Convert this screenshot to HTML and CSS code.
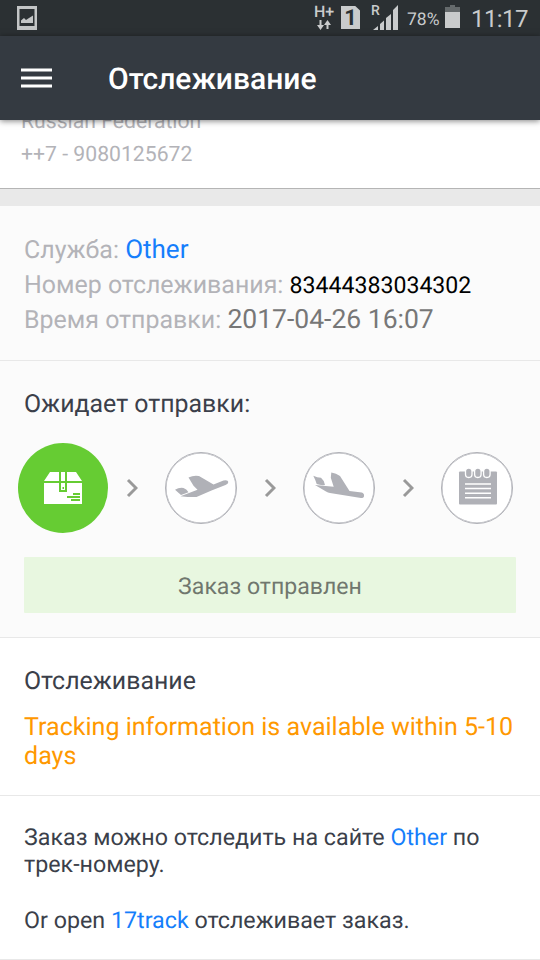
FILE: index.html
```
<!DOCTYPE html>
<html lang="ru">
<head>
<meta charset="utf-8">
<title>Отслеживание</title>
<link rel="stylesheet" href="styles.css">
</head>
<body>
<div class="status">
  <svg class="status-shot" width="20" height="24" viewBox="0 0 20 24"><path fill="#c3c5c6" fill-rule="evenodd" d="M0 0h20v24H0zM2.500 3v17h15V3z"/><path fill="#c3c5c6" d="M4 17v-2.500l3-2.500 2 2 3-2 4-2.500V17z"/></svg>
  <div class="status-net"><span>H+</span><svg width="14" height="10" viewBox="0 0 14 10"><path fill="#c9cbcc" d="M2.500 0h2v5H7L3.500 10 0 5h2.500zM9.500 9h2V5H14L10.500 0 7 5h2.500z"/></svg></div>
  <div class="status-sim">1</div>
  <div class="status-signal"><span>R</span><svg width="27" height="25" viewBox="0 0 27 25"><path fill="#c9cbcc" d="M1 25l5-4v4zM8 19l4-3.500V25H8zM14 13l5-4v16h-5zM21 5l5-5v25h-5z"/></svg></div>
  <div class="status-pct">78%</div>
  <svg class="status-batt" width="15" height="23" viewBox="0 0 15 23"><path fill="#656a6c" d="M5 0h5v2h5v6H0V2h5z"/><path fill="#c9cbcc" d="M0 7h15v16H0z"/></svg>
  <div class="status-time">11:17</div>
</div>
<header class="appbar">
  <svg width="31" height="21" viewBox="0 0 31 21"><path fill="#fff" d="M0 .5h31v3H0zM0 8.500h31v3H0zM0 16.500h31v3H0z"/></svg>
  <h1>Отслеживание</h1>
</header>
<main>
  <section class="address"><p>Russian Federation</p><p>++7 - 9080125672</p></section>
  <section class="info">
    <p>Служба: <a class="big">Other</a></p>
    <p>Номер отслеживания: <span class="number">83444383034302</span></p>
    <p>Время отправки: <span class="date">2017-04-26 16:07</span></p>
  </section>
  <section class="progress">
    <h2>Ожидает отправки:</h2>
    <div class="steps">
      <div class="step active"><svg width="90" height="90" viewBox="0 0 90 90"><path fill="#fff" d="M32 29h26l6 9H26zM26 40h38v21H26z"/><path fill="#6c3" d="M41 29h8v20h-8z"/><path fill="#fff" d="M43 29h4v9h-4zM43 40h4v7h-4z"/><path fill="#6c3" d="M44.500 44h1.500v2h-1.500zM55 50h7v2h-7zM49 53h13v2H49zM53 56h9v2h-9z"/></svg></div>
      <svg class="chev" width="12" height="20" viewBox="0 0 12 20"><path d="M2 2l8 8-8 8"/></svg>
      <div class="step"><svg width="72" height="72" viewBox="0 0 72 72"><path fill="#b0b1b7" d="M23.500 25.500q5-2.500 10.500-1.500l14.500 8.500 10-4q4.500-1 4.800 1.500 0 2-2.800 3L46.500 38.500 31.500 45h-9L15.500 44.200l17-6.500-4-4z"/><path fill="#b0b1b7" d="M10 37.800q4-2.500 8.500-1.800 3 1 5 4.200L16 43z"/></svg></div>
      <svg class="chev" width="12" height="20" viewBox="0 0 12 20"><path d="M2 2l8 8-8 8"/></svg>
      <div class="step"><svg width="72" height="72" viewBox="0 0 72 72"><path fill="#b0b1b7" d="M28.300 20.500q5 .5 8.700 3.500l9.500 15 12.200 1.500q2.800 1 2.300 3.500 0 2-3 2L27 41q-2-.5-4-1.500L12 33l18.700 1.700-2.900-9z"/><path fill="#b0b1b7" d="M10.300 23.800q4 1.800 7.700 1.900 3 2.300 4 7.300-4.500.5-8.300-1-1.200-4-3.400-8.200z"/></svg></div>
      <svg class="chev" width="12" height="20" viewBox="0 0 12 20"><path d="M2 2l8 8-8 8"/></svg>
      <div class="step"><svg width="72" height="72" viewBox="0 0 72 72"><rect x="18" y="19.500" width="38" height="33" rx="1" fill="#b0b1b7"/><g fill="#b0b1b7" stroke="#fff" stroke-width="1.300"><rect x="24.500" y="16" width="6.500" height="9.500" rx="3.200"/><rect x="33.600" y="16" width="6.500" height="9.500" rx="3.200"/><rect x="42.600" y="16" width="6.500" height="9.500" rx="3.200"/></g><path stroke="#fff" stroke-width="1.500" d="M24 32h26M24 36.600h26M24 41.200h26M24 45.800h26"/></svg></div>
    </div>
    <div class="notice">Заказ отправлен</div>
  </section>
  <section class="tracking"><h2>Отслеживание</h2><p>Tracking information is available within 5-10 days</p></section>
  <section class="links"><p>Заказ можно отследить на сайте <a>Other</a> по<br>трек-номеру.</p><p>Or open <a>17track</a> отслеживает заказ.</p></section>
</main>
</body>
</html>
```
FILE: styles.css
```
* { box-sizing: border-box; }
body { margin: 0; width: 540px; height: 960px; overflow: hidden; background: #fff; font-family: Roboto, sans-serif; color: #3b3f4a; text-rendering: geometricPrecision; }
h1, h2, p { margin: 0; font-weight: 400; }
a { color: #157efb; }
svg { display: block; flex: none; }
.status { height: 36px; background: #2b3033; color: #c9cbcc; display: flex; align-items: flex-start; padding-left: 17px; white-space: nowrap; }
.status-shot { margin-top: 6px; }
.status-net { width: 24px; margin: 4px 0 0 277px; font: 500 16px/15px Roboto, sans-serif; }
.status-net svg { margin: 1px 0 0 3px; }
.status-sim { width: 19px; height: 23px; margin: 6px 0 0 3px; background: #c9cbcc; color: #2b3033; clip-path: polygon(0 0, 75% 0, 100% 20%, 100% 100%, 0 100%); font: 700 22px/25px Roboto, sans-serif; text-align: center; }
.status-signal { width: 28px; margin: 5px 0 0 12px; display: grid; }
.status-signal span, .status-signal svg { grid-area: 1 / 1; }
.status-signal span { font: 500 14px/13px Roboto, sans-serif; margin-left: -1px; }
.status-pct { width: 34px; margin: 9px 0 0 7px; font-size: 17.5px; line-height: 22px; }
.status-batt { margin: 5px 0 0 4px; }
.status-time { margin: 5px 0 0 11px; font-size: 24px; line-height: 29px; letter-spacing: -.6px; }
.appbar { position: relative; height: 84px; background: #343a41; display: flex; align-items: center; padding-left: 21px; box-shadow: 0 1px 6px rgba(0,0,0,.5); }
.appbar h1 { margin: 3px 0 0 56px; color: #fff; font-size: 30px; line-height: 36px; font-weight: 500; }
main { background: #e9e9e9; }
.address { display: flow-root; height: 69px; padding-left: 21px; margin-bottom: 17px; background: #fff; border-bottom: 1px solid #b5b5b5; color: #b3b3b8; font-size: 21.2px; line-height: 33px; }
.address p:first-child { margin-top: -15px; }
.info { height: 155px; padding: 27px 24px; background: #fbfbfb; border-bottom: 1px solid #e8e8e8; color: #b3b3b8; font-size: 24.95px; line-height: 35px; white-space: nowrap; }
.info a, .info span { line-height: 1; }
.big { font-size: 26px; }
.number { font-size: 23.1px; color: #000; }
.date { font-size: 26.5px; color: #777; }
.progress { height: 277px; padding: 26px 24px 0; background: #fbfbfb; border-bottom: 1px solid #e8e8e8; }
h2 { font-size: 24.9px; line-height: 36px; }
.steps { display: flex; align-items: center; gap: 27px; margin: 20px -6px 24px; }
.step { width: 72px; height: 72px; flex: none; border-radius: 50%; border: 1px solid #b0b1b7; background: #fff; display: flex; align-items: center; justify-content: center; box-shadow: inset 0 0 0 .5px #b0b1b7; }
.step.active { width: 90px; height: 90px; margin-right: -9px; background: #6c3; border: 0; box-shadow: none; }
.chev path { fill: none; stroke: #999; stroke-width: 3; }
.notice { height: 56px; border-radius: 1px; background: #e8f7e0; color: #70776e; font-size: 23.1px; line-height: 60px; text-align: center; }
.tracking { height: 158px; padding: 26px 24px 0; background: #fff; border-bottom: 1px solid #e8e8e8; }
.tracking p { margin-top: 13px; margin-right: -2px; color: #ff9800; font-size: 25.05px; line-height: 29px; }
.links { height: 164px; padding: 28px 24px 0; background: #fff; border-bottom: 1px solid #e8e8e8; font-size: 23.25px; line-height: 27px; }
.links p + p { margin-top: 29px; }
```
